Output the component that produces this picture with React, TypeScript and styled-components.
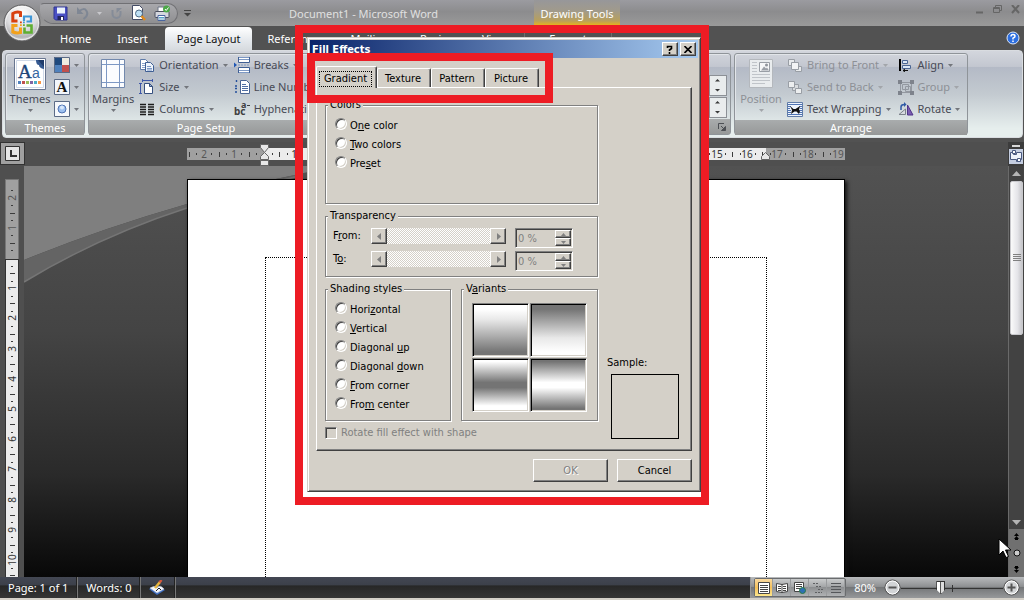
import React from "react";
import styled, { createGlobalStyle } from "styled-components";

const UI = '"Noto Sans", "Open Sans", sans-serif';
const CLASSIC = '"DejaVu Sans Condensed", "DejaVu Sans", sans-serif';
const FACE = "#d4d0c8";
const RED = "#ed1c24";

const GlobalStyle = createGlobalStyle`
  * { box-sizing: border-box; }
  body { margin: 0; background: #525252; font-family: ${UI}; font-size: 11px; overflow: hidden; }
  button, input, select { font: inherit; color: inherit; }
  button { padding: 0; border: 0; background: none; }
  svg { display: block; flex: none; }
`;

const Window = styled.div`
  position: relative;
  display: flex;
  flex-direction: column;
  min-height: 100vh;
`;

/* ---------- title bar ---------- */

const TitleBar = styled.header`
  display: grid;
  grid-template-columns: 289px 245px 86px 1fr;
  height: 26px;
  background: linear-gradient(#9b9ba0, #8c8c8e 45%, #9a9a9a);
  color: #e0e0e0;
  line-height: 16px;
`;

const QuickAccess = styled.div`
  display: flex;
  align-items: center;
  padding-left: 40px;
`;

const QuickPill = styled.div`
  display: flex;
  align-items: center;
  gap: 8px;
  width: 138px;
  height: 21px;
  padding-left: 12px;
  border: 1px solid #707074;
  border-left-color: transparent;
  border-radius: 4px 11px 11px 14px;
  background: linear-gradient(#a8a8ac, #8f8f91);
`;

const IconButton = styled.button`
  display: flex;
  align-items: center;
  justify-content: center;
`;

const MoreButton = styled(IconButton)`
  margin-left: 6px;
`;

const DocTitle = styled.h1`
  margin: 0;
  padding-top: 6px;
  font-size: 11px;
  font-weight: 400;
`;

const ContextTitle = styled.div`
  padding-top: 6px;
  text-align: center;
  color: #fff;
  background: linear-gradient(#97979a, #a09a8c 40%, #b8a05c 80%, #f0b810);
`;

const Caption = styled.div`
  display: flex;
  justify-content: flex-end;
  gap: 9px;
  padding: 5px 4px 0 0;
  align-items: flex-start;
`;

const OfficeButton = styled.button`
  position: absolute;
  left: 3px;
  top: 4px;
  z-index: 2;
`;

/* ---------- ribbon ---------- */

const TabStrip = styled.nav`
  display: flex;
  align-items: flex-end;
  height: 24px;
  padding: 0 4px 0 47px;
  background: #525252;
`;

const RibbonTab = styled.button<{ $active?: boolean }>`
  height: 23px;
  padding: 0 ${(p) => (p.$active ? 12 : 13)}px;
  margin: 0 ${(p) => (p.$active ? 2 : 0)}px 0 ${(p) => (p.$active ? 4 : 0)}px;
  line-height: 22px;
  font-size: 11px;
  color: ${(p) => (p.$active ? "#111" : "#fff")};
  border-radius: 4px 4px 0 0;
  background: ${(p) => (p.$active ? "linear-gradient(#fff, #e4e8ec 60%, #d6dade)" : "none")};
`;

const ContextTab = styled(RibbonTab)`
  width: 88px;
  margin-left: 5px;
  border: solid #6e6e6e;
  border-width: 0 1px;
  border-radius: 0;
`;

const HelpButton = styled(IconButton)`
  margin-left: auto;
  align-self: center;
`;

const Ribbon = styled.section`
  display: flex;
  gap: 3px;
  height: 88px;
  margin: 0 1px 4px 2px;
  padding: 2px;
  border: 1px solid #d9dce0;
  border-radius: 4px;
  background: linear-gradient(#d3d6dd, #c3c7d0 18%, #b4bac6 19%, #c3cad0 50%, #e6eeed 90%);
`;

const Group = styled.section<{ $grow?: boolean; $width?: number }>`
  display: flex;
  flex-direction: column;
  flex: ${(p) => (p.$grow ? "1 1 0" : "0 0 auto")};
  width: ${(p) => (p.$width ? p.$width + "px" : "auto")};
  border: 1px solid #8f9499;
  border-radius: 3px;
  box-shadow: inset 1px 1px 0 #e2e5e9;
`;

const GroupBody = styled.div`
  flex: 1;
  display: flex;
  padding: 0 3px;
  color: #484a55;
`;

const GroupLabel = styled.h2`
  display: flex;
  align-items: center;
  justify-content: center;
  height: 15px;
  margin: 0;
  font-size: 11px;
  font-weight: 400;
  line-height: 15px;
  color: #fff;
  background: linear-gradient(#a9acad, #969898);
`;

const LauncherLabel = styled(GroupLabel)`
  justify-content: flex-end;
  padding-right: 4px;
`;

const BigButton = styled.button<{ $off?: boolean; $wide?: boolean }>`
  display: flex;
  flex-direction: column;
  align-items: center;
  width: ${(p) => (p.$wide ? 46 : 42)}px;
  height: 66px;
  padding-top: 4px;
  line-height: 16px;
  color: ${(p) => (p.$off ? "#8d9096" : "inherit")};
  svg + span { margin-top: 1px; }
  span + svg { margin-top: 2px; }
`;

const Stack = styled.div<{ $gap?: number }>`
  display: flex;
  flex-direction: column;
  margin-left: ${(p) => p.$gap ?? 4}px;
`;

const SmallButton = styled.button<{ $off?: boolean }>`
  display: flex;
  align-items: center;
  gap: 4px;
  height: 22px;
  line-height: 16px;
  white-space: nowrap;
  color: ${(p) => (p.$off ? "#8d9096" : "inherit")};
`;

const SpinStack = styled.div`
  display: flex;
  flex-direction: column;
  justify-content: flex-end;
  align-items: flex-end;
  gap: 1px;
  flex: 1;
  padding-bottom: 1px;
`;

const SpinPair = styled.button`
  display: flex;
  align-items: center;
  justify-content: center;
  width: 18px;
  height: 21px;
  border: 1px solid #8c9096;
  background: #e9eced;
`;

/* ---------- document area ---------- */

const Workspace = styled.main`
  display: grid;
  flex: 1;
  grid-template-columns: 24px 1fr 16px;
  grid-template-rows: 24px 1fr;
  background: #4f4f4f;
`;

const TabSelector = styled.button`
  display: flex;
  align-items: center;
  justify-content: center;
  width: 25px;
  height: 23px;
  border: 1px solid #333;
  background: #a0a0a0;
`;

const RulerRow = styled.div`
  display: flex;
  justify-content: center;
`;

const RulerColumn = styled.div`
  padding: 13px 0 0 5px;
  overflow: hidden;
`;

const Canvas = styled.div`
  display: grid;
  justify-items: center;
  overflow: hidden;
  background: linear-gradient(#525252, #444 40%, #2a2a2a 75%, #080808);
  > * { grid-area: 1 / 1; }
`;

const Swoosh = styled.svg`
  justify-self: start;
`;

const Sheet = styled.article`
  position: relative;
  width: 658px;
  margin-top: 13px;
  padding: 77px;
  padding-bottom: 0;
  border: 1px solid #000;
  border-bottom: 0;
  background: #fff;
  box-shadow: 2px 2px 4px #111;
`;

const TextArea = styled.div`
  height: 100%;
  border: 1px dotted #000;
  border-bottom: 0;
`;

const RulerToggle = styled.div`
  display: flex;
  flex-direction: column;
  align-items: center;
  background: #3c3c3c;
`;

const SplitHandle = styled.div`
  width: 8px;
  height: 2px;
  margin: 3px 0 2px;
  background: #d8d8d8;
`;

const ScrollColumn = styled.div`
  display: flex;
  flex-direction: column;
  border-left: 1px solid #6a6a6a;
  background: #424242;
`;

const ScrollArrow = styled.button`
  display: flex;
  align-items: center;
  justify-content: center;
  height: 14px;
`;

const ScrollTrack = styled.div`
  flex: 1;
  padding: 1px 1px 0;
`;

const ScrollThumb = styled.div`
  display: flex;
  align-items: center;
  justify-content: center;
  height: 154px;
  border: 1px solid #c8c8cc;
  border-radius: 2px;
  background: linear-gradient(90deg, #fafafa, #e4e4e8 60%, #c6c6ca);
`;

const BrowseButtons = styled.div`
  display: flex;
  flex-direction: column;
  align-items: center;
  justify-content: space-around;
  height: 48px;
  background: #707070;
`;

/* ---------- status bar ---------- */

const StatusBar = styled.footer`
  display: flex;
  height: 23px;
  border-bottom: 2px solid ${FACE};
  color: #fff;
  line-height: 20px;
  background: linear-gradient(#434753, #3c404a 38%, #272727 42%, #353535);
`;

const StatusItem = styled.div`
  display: flex;
  align-items: center;
  padding: 0 8px;
  border-right: 2px groove #777;
`;

const ViewZone = styled.div`
  display: flex;
  align-items: center;
  flex: none;
  width: 274px;
  margin-left: auto;
  padding: 0 4px 0 3px;
  border-left: 1px solid #999;
  background: linear-gradient(#b8babc, #8f9193 45%, #747678 50%, #96989a);
`;

const ViewGroup = styled.div`
  display: flex;
  height: 19px;
  border: 1px solid #6a6c6e;
  border-radius: 2px;
  background: linear-gradient(#c9cbcc, #a4a6a8 45%, #8d8f91 50%, #b0b2b4);
`;

const ViewButton = styled.button<{ $on?: boolean }>`
  display: flex;
  align-items: center;
  justify-content: center;
  width: 18px;
  border-right: 1px solid #999b9d;
  background: ${(p) => (p.$on ? "linear-gradient(#f8d9a0, #f5c05a 50%, #fde68c)" : "none")};
`;

const ZoomText = styled.button`
  width: 38px;
  color: #fff;
`;

const ZoomRange = styled.input`
  appearance: none;
  flex: 1;
  min-width: 0;
  height: 16px;
  margin: 0;
  background:
    linear-gradient(#333, #333) 50% 5px / 1px 7px no-repeat,
    linear-gradient(#333, #333) 0 8px / 100% 1px no-repeat;
  &::-webkit-slider-thumb {
    appearance: none;
    width: 9px;
    height: 13px;
    border: 1px solid #333;
    background: linear-gradient(90deg, #fff 40%, #555 41%, #555 59%, #ddd 60%);
    clip-path: polygon(0 0, 100% 0, 100% 65%, 50% 100%, 0 65%);
  }
`;

/* ---------- dialog ---------- */

const Dialog = styled.div`
  position: absolute;
  left: 307px;
  top: 37px;
  z-index: 3;
  display: flex;
  flex-direction: column;
  width: 394px;
  padding: 2px;
  border: 1px solid;
  border-color: ${FACE} #404040 #404040 ${FACE};
  box-shadow: inset 1px 1px 0 #fff, inset -1px -1px 0 #808080;
  background: ${FACE};
  color: #000;
  font-family: ${CLASSIC};
  font-size: 11px;
  line-height: 14px;
`;

const DialogBar = styled.div`
  display: flex;
  align-items: center;
  gap: 2px;
  height: 18px;
  padding: 0 2px 0 2px;
  color: #fff;
  background: linear-gradient(90deg, #0a246a, #a6caf0);
`;

const DialogTitle = styled.h2`
  flex: 1;
  margin: 0;
  padding-top: 1px;
  font-size: 11px;
  font-weight: 700;
`;

const Raised = styled.button`
  display: flex;
  align-items: center;
  justify-content: center;
  border: 1px solid;
  border-color: #fff #404040 #404040 #fff;
  box-shadow: inset -1px -1px 0 #808080;
  background: ${FACE};
`;

const BarButton = styled(Raised)`
  width: 16px;
  height: 14px;
  color: #000;
`;

const DialogBody = styled.div`
  padding: 8px 6px 7px;
`;

const DialogTabs = styled.div`
  display: flex;
  align-items: flex-end;
  height: 21px;
`;

const DialogTab = styled.button<{ $active?: boolean }>`
  position: relative;
  width: ${(p) => (p.$active ? 61 : 54)}px;
  height: ${(p) => (p.$active ? 22 : 19)}px;
  margin-bottom: ${(p) => (p.$active ? -1 : 0)}px;
  z-index: ${(p) => (p.$active ? 1 : 0)};
  border: 1px solid;
  border-width: 1px 1px 0;
  border-color: #fff #404040 #fff #fff;
  border-radius: 2px 2px 0 0;
  box-shadow: inset -1px 0 0 #808080;
  background: ${FACE};
  span {
    display: block;
    margin: 2px 4px 0 2px;
    border: ${(p) => (p.$active ? "1px dotted #000" : "0")};
  }
`;

const Panel = styled.div`
  display: flex;
  gap: 9px;
  height: 364px;
  padding: 10px 8px 9px;
  border: 1px solid;
  border-color: #fff #404040 #404040 #fff;
  box-shadow: inset -1px -1px 0 #808080;
`;

const Column = styled.div`
  display: flex;
  flex-direction: column;
  gap: 5px;
  width: 273px;
`;

const Pair = styled.div`
  display: flex;
  justify-content: space-between;
`;

const Frame = styled.fieldset<{ $width?: number; $height: number }>`
  width: ${(p) => (p.$width ? p.$width + "px" : "auto")};
  height: ${(p) => p.$height}px;
  min-width: 0;
  margin: 0;
  padding: 4px 7px 0;
  border: 1px solid #808080;
  box-shadow: 1px 1px 0 #fff, inset 1px 1px 0 #fff;
`;

const Legend = styled.legend`
  margin-left: -5px;
  padding: 0 2px;
  height: 14px;
  background: ${FACE};
`;

const RadioRow = styled.label`
  display: flex;
  align-items: center;
  gap: 3px;
  height: 19px;
  padding-left: 2px;
`;

const Radio = styled.input`
  appearance: none;
  width: 12px;
  height: 12px;
  margin: 0 0 4px;
  border: 1px solid;
  border-color: #808080 #fff #fff #808080;
  border-radius: 50%;
  box-shadow: inset 1px 1px 0 #404040, inset -1px -1px 0 ${FACE};
  background: #fff;
`;

const SliderRow = styled.div`
  display: flex;
  align-items: flex-start;
  height: 23px;
  padding-top: 1px;
  label { width: 38px; padding-top: 1px; }
`;

const SliderFrame = styled.div`
  display: flex;
  width: 135px;
  height: 16px;
  margin-right: 9px;
`;

const ArrowButton = styled(Raised)`
  width: 16px;
  height: 16px;
`;

const SliderTrack = styled.div`
  flex: 1;
  background: repeating-conic-gradient(#fff 0 25%, ${FACE} 0 50%) 0 0 / 2px 2px;
`;

const Spinner = styled.div`
  display: flex;
  width: 58px;
  height: 20px;
  padding: 1px;
  border: 1px solid;
  border-color: #808080 #fff #fff #808080;
  box-shadow: inset 1px 1px 0 #404040;
`;

const SpinnerInput = styled.input`
  flex: 1;
  min-width: 0;
  padding: 1px 1px 0;
  border: 0;
  color: #808080;
  background: transparent;
`;

const SpinnerArrows = styled.div`
  display: grid;
  width: 16px;
  grid-template-rows: 1fr 1fr;
`;

const SwatchGrid = styled.div`
  display: grid;
  grid-template-columns: 57px 57px;
  grid-auto-rows: 54px;
  gap: 1px;
  margin-top: 3px;
  margin-left: 3px;
`;

const Swatch = styled.button<{ $fill: string }>`
  border: 1px solid;
  border-color: #808080 #fff #fff #808080;
  box-shadow: inset 1px 1px 0 #000, inset -1px -1px 0 ${FACE};
  background: linear-gradient(${(p) => p.$fill});
`;

const CheckRow = styled.label`
  display: flex;
  align-items: center;
  gap: 4px;
  color: #808080;
`;

const Check = styled.input`
  appearance: none;
  width: 12px;
  height: 12px;
  margin: 0;
  border: 1px solid;
  border-color: #808080 #fff #fff #808080;
  box-shadow: inset 1px 1px 0 #404040;
`;

const SampleColumn = styled.div`
  display: flex;
  flex-direction: column;
  justify-content: flex-end;
  gap: 4px;
  padding-bottom: 2px;
`;

const SampleBox = styled.div`
  width: 68px;
  height: 65px;
  margin-left: 4px;
  border: 1px solid #000;
`;

const Actions = styled.div`
  display: flex;
  justify-content: flex-end;
  gap: 9px;
  padding-top: 8px;
`;

const ActionButton = styled(Raised)`
  width: 75px;
  height: 23px;
  &:disabled { color: #808080; text-shadow: 1px 1px 0 #fff; }
`;

/* ---------- annotations and pointer ---------- */

const Highlight = styled.div<{ $x: number; $y: number; $w: number; $h: number }>`
  position: absolute;
  left: ${(p) => p.$x}px;
  top: ${(p) => p.$y}px;
  z-index: 4;
  width: ${(p) => p.$w}px;
  height: ${(p) => p.$h}px;
  border: 8px solid ${RED};
  pointer-events: none;
`;

const Pointer = styled.svg`
  position: absolute;
  left: 998px;
  top: 538px;
  z-index: 5;
`;

/* ---------- drawings ---------- */

const Caret = ({ color = "#73767c" }: { color?: string }) => (
  <svg width="5" height="3"><path d="M0 0h5L2.500 3z" fill={color} /></svg>
);

const Tri = ({ d, color = "#000", w = 7, h = 7 }: { d: string; color?: string; w?: number; h?: number }) => (
  <svg width={w} height={h}><path d={d} fill={color} /></svg>
);

const OfficeLogo = () => (
  <svg width="38" height="38" viewBox="0 0 38 38">
    <defs>
      <radialGradient id="orb" cx=".5" cy=".25" r=".8">
        <stop offset="0" stopColor="#fff" /><stop offset=".55" stopColor="#dcdcde" />
        <stop offset=".8" stopColor="#b4b4b7" /><stop offset="1" stopColor="#f4f4f4" />
      </radialGradient>
    </defs>
    <circle cx="19" cy="19" r="18" fill="url(#orb)" stroke="#5b5b5d" />
    <circle cx="19" cy="19" r="16.500" fill="none" stroke="#fff" strokeOpacity=".6" />
    <g fill="none">
      <path d="M14.500 17H9.800V9.500q3.700-2.200 7.700-1v4.500" stroke="#d8400f" strokeWidth="3" />
      <path d="M21 17v-4.500h7v5h-4.500" stroke="#3f96d6" strokeWidth="2.200" />
      <path d="M14.500 21.500H9.800v6.500q3.700 1.500 7.700 .5v-5" stroke="#f3a11b" strokeWidth="3" />
      <path d="M23.500 21.500h5v7h-7v-5" stroke="#5fae32" strokeWidth="2.600" />
    </g>
    <path d="M17 17.500h1.800v1.800H17z" fill="#d8400f" /><path d="M20 17.500h1.800v1.800H20z" fill="#3f96d6" />
    <path d="M17 20.300h1.800v1.800H17z" fill="#f3a11b" /><path d="M20 20.300h1.800v1.800H20z" fill="#5fae32" />
  </svg>
);

const SaveIcon = () => (
  <svg width="15" height="15"><path d="M1 1h13v13H2.500L1 12.500z" fill="#4a50c4" stroke="#2f3590" />
    <path d="M4 1.500h8v6H4z" fill="#e9f1fb" /><path d="M4.500 10h6.500v4H4.500z" fill="#23265c" /><path d="M8 11h2v3H8z" fill="#fff" /></svg>
);
const UndoIcon = () => (
  <svg width="13" height="14"><path d="M3 5.500Q8 1 10.500 5t-3 8" fill="none" stroke="#7f8794" strokeWidth="2" /><path d="M1 1v7h6.500z" fill="#7f8794" /></svg>
);
const RedoIcon = () => (
  <svg width="13" height="13"><path d="M2.500 3v4a4 4 0 0 0 8 0V4" fill="none" stroke="#858c98" strokeWidth="2" /><path d="M6.500 6V1H12z" fill="#858c98" /></svg>
);
const PreviewIcon = () => (
  <svg width="15" height="16"><path d="M1.500.5h7l3 3v11h-10z" fill="#fff" stroke="#444c66" /><circle cx="8" cy="8.500" r="3.500" fill="#bfe0f4" stroke="#4d6a85" />
    <path d="M10.500 11l3.500 4" stroke="#e08b1e" strokeWidth="2.500" /></svg>
);
const PrintIcon = () => (
  <svg width="17" height="16"><path d="M4 2h7v5H4z" fill="#fff" stroke="#6d7485" /><rect x="1" y="6.500" width="14" height="6" rx="1" fill="#d5d7de" stroke="#4c5160" />
    <path d="M4 10.500h7v5H4z" fill="#fff" stroke="#4a66a0" /><path d="M5 12.500h5M5 14h5" stroke="#57a3c8" /><circle cx="12.500" cy="4" r="3.500" fill="#4ba847" /><path d="M11 4l1.200 1.500L14.500 2.500" stroke="#fff" fill="none" /></svg>
);
const MoreIcon = () => (
  <svg width="7" height="7"><path d="M0 .5h7" stroke="#444" /><path d="M0 3h7L3.500 6.500z" fill="#444" /></svg>
);

const ThemesIcon = () => (
  <svg width="32" height="32"><path d="M.5.500h31v31H.5z" fill="#fff" stroke="#68758f" /><path d="M2.500 2.500h27v27h-27z" fill="#fff" stroke="#cfd9e8" />
    <path d="M22 2h8v9q-5-1-5-4-3 0-3-5z" fill="#34588f" /><path d="M24 2h6v7z" fill="#203c6b" />
    <text x="4" y="20" fontFamily="Liberation Serif" fontSize="19" fill="#1d4578" stroke="#1d4578" strokeWidth=".4">A</text>
    <text x="18" y="20" fontFamily="Liberation Sans" fontSize="14" fill="#35669f">a</text>
    {["#4f81bd", "#c0504d", "#9bbb59", "#8064a2", "#4bacc6", "#f79646"].map((c, i) => <rect key={c} x={4 + i * 4} y="23" width="3" height="3" fill={c} />)}
  </svg>
);
const ColorsIcon = () => (
  <svg width="16" height="16"><path fill="#1f497d" d="M0 0h8v8H0z" /><path fill="#eeece1" d="M8 0h8v8H8z" /><path fill="#4f81bd" d="M0 8h8v8H0z" /><path fill="#c0504d" d="M8 8h8v8H8z" /><path d="M.5.500h15v15H.5z" fill="none" stroke="#5b6b86" /></svg>
);
const FontsIcon = () => (
  <svg width="16" height="16"><path d="M.5.500h15v15H.5z" fill="#f2f6fb" stroke="#5b6b86" /><text x="8" y="13" textAnchor="middle" fontFamily="Liberation Serif" fontSize="15" fontWeight="700" fill="#111">A</text></svg>
);
const EffectsIcon = () => (
  <svg width="16" height="16"><path d="M.5.500h15v15H.5z" fill="#f6f9fc" stroke="#5b6b86" /><circle cx="8" cy="8" r="4" fill="#9cc0f0" stroke="#4f74b4" /><circle cx="8" cy="6.500" r="2" fill="#d8e8fc" /></svg>
);
const MarginsIcon = () => (
  <svg width="24" height="32"><path d="M.5 1.500h23v28H.5z" fill="#fbfcfe" stroke="#7389ad" /><path d="M5.500 2v27M18.500 2v27M1 6.500h22M1 24.500h22" stroke="#7d98c4" /></svg>
);
const OrientationIcon = () => (
  <svg width="16" height="15"><path d="M1.500 1.500h5l3 3v7h-8z" fill="#fff" stroke="#5f7ba8" /><path d="M3 5.500h4M3 7.500h4M3 9.500h3" stroke="#8ba4cc" /><path d="M6.500 4.500h5l3 3v6h-8z" fill="#eef4fc" stroke="#3f5f94" /><path d="M8 8.500h4M8 10.500h5M8 12h5" stroke="#7d98c4" /></svg>
);
const SizeIcon = () => (
  <svg width="16" height="16"><path d="M3 1.500h11M3.500 0v3M13.500 0v3M1.500 4v11M0 4.500h3M0 14.500h3" stroke="#3f58a8" fill="none" /><path d="M5.500 4.500h5l3 3v7h-8z" fill="#fff" stroke="#36507f" /><path d="M10.500 4.500v3h3z" fill="#9db5d8" stroke="#36507f" /></svg>
);
const ColumnsIcon = () => (
  <svg width="16" height="13"><path d="M1 1.500h6M9 1.500h6M1 4h6M9 4h6M1 6.500h6M9 6.500h6M1 9h6M9 9h6M1 11.500h6M9 11.500h6" stroke="#1c1c1c" strokeWidth="1.300" /></svg>
);
const BreaksIcon = () => (
  <svg width="16" height="16"><path d="M4.500 0v5.500h11V0" fill="#fff" stroke="#3f5f94" /><path d="M4.500 16v-5.500h11V16" fill="#fff" stroke="#3f5f94" /><path d="M5 2.500h10M5 13.500h10M5 .5h10M5 15.500h10" stroke="#7d98c4" /><path d="M4 8h12" stroke="#7d98c4" strokeDasharray="2 1" /><path d="M0 5.500v5L3 8z" fill="#1f56b4" /></svg>
);
const LinesIcon = () => (
  <svg width="16" height="16"><path d="M6.500 1.500h6l3 3v10h-9z" fill="#fff" stroke="#4a6593" /><path d="M8 5.500h4M8 7.500h6M8 9.500h6M8 11.500h6" stroke="#506fa3" /><path d="M2.500 1v3M1 7h3M1 9.500h3M1 13h3" stroke="#234f9c" strokeWidth="1.400" strokeDasharray="2 1" /></svg>
);
const HyphenIcon = () => (
  <svg width="16" height="16" fontFamily="Noto Sans" fontWeight="700" fontSize="10" fill="#404040"><text x="0" y="14">bc</text><text x="7" y="7" fontSize="9">a</text><path d="M13 4h3v1h-3z" /></svg>
);
const PositionIcon = () => (
  <svg width="24" height="32"><path d="M.5 1.500h23v28H.5z" fill="#e9ecee" stroke="#b4b8bd" /><path d="M10.500 4.500h10v9h-10z" fill="#f6f7f8" stroke="#999ea5" /><path d="M12 12.500l3-4 2 2 1-1 2 3z" fill="#9a9fa6" /><circle cx="17.500" cy="7" r="1.500" fill="#8f949b" /><path d="M3 4.500h5M3 7.500h5M3 10.500h5M3 13.500h5M3 16.500h18M3 19.500h18M3 22.500h18M3 25.500h13" stroke="#c0c4c9" /></svg>
);
const FrontIcon = () => (
  <svg width="16" height="15" stroke="#999ea5"><path d="M1.500 1.500h6v6h-6z" fill="#e8eaec" /><path d="M8.500 8.500h6v5h-6z" fill="#e8eaec" /><path d="M4.500 4.500h7v7h-7z" fill="#f3f4f5" /></svg>
);
const BackIcon = () => (
  <svg width="16" height="15" stroke="#999ea5"><path d="M5.500 4.500h6v6h-6z" fill="#d9dcdf" /><path d="M1.500 1.500h6v6h-6z" fill="#eceeef" /><path d="M8.500 8.500h6v5h-6z" fill="#eceeef" /></svg>
);
const WrapIcon = () => (
  <svg width="16" height="15"><path d="M.5.500h15v14H.5z" fill="#eef4fc" stroke="#5f7ba8" /><path d="M1 2.500h14M1 4.500h3M12 4.500h3M1 6.500h2M13 6.500h2M1 8.500h3M12 8.500h3M1 10.500h3M12 10.500h3M1 12.500h14" stroke="#4f74b4" /><path d="M3 4l3.500 3h2L13 4l-1 4 1 1-1 3-2.500-2.500h-2L4 12l1-4z" fill="#111" /></svg>
);
const AlignIcon = () => (
  <svg width="16" height="14"><path d="M2 1v12" stroke="#000" strokeWidth="2" /><path d="M4.500 2.500h5v3h-5zM4.500 7.500h8v3h-8z" fill="#dbe7f6" stroke="#4a6593" /><path d="M5 12.500h5M5 12.500l2-1.500M5 12.500l2 1.500" stroke="#111" /></svg>
);
const GroupIcon = () => (
  <svg width="16" height="15"><path d="M2.500 2.500h11v10h-11zM4.500 4.500h6v5h-6zM7.500 6.500h5v5h-5z" fill="none" stroke="#9398a0" /><path d="M0 0h4v4H0zM12 0h4v4h-4zM0 11h4v4H0zM12 11h4v4h-4z" fill="#7e838c" /></svg>
);
const RotateIcon = () => (
  <svg width="16" height="14"><path d="M9.500 3v10H15z" fill="#7a5db0" stroke="#50358a" /><path d="M1 12.500L7.500 7v5.500z" fill="#d7dbe0" stroke="#7c828b" /><path d="M3 8V5q0-2.500 3.500-2.500" fill="none" stroke="#2f5aa6" strokeWidth="1.500" /><path d="M6 0v5l2.500-2.500z" fill="#2f5aa6" /></svg>
);
const LauncherIcon = () => (
  <svg width="8" height="8" fill="none" stroke="#4c4f54"><path d="M.5 6V.5H6" /><path d="M3 3l3 3" /><path d="M7.500 3.500v4h-4z" fill="#4c4f54" /></svg>
);
const UpDown = () => (
  <svg width="6" height="15" fill="#3a3a3a"><path d="M0 3.500h5L2.500 1zM0 11h5l-2.500 2.500z" /></svg>
);

const StatusPen = () => (
  <svg width="17" height="16"><path d="M0 9l8-4 8 5-8 5z" fill="#3d6cc0" /><path d="M1 8q4-3 7 0 3-4 7 1l-7 4z" fill="#f4f6fa" stroke="#b8c2d6" strokeWidth=".6" /><path d="M6 8l5-6" stroke="#e8b53c" strokeWidth="2.500" /><path d="M10.500 2.500l2-2.500" stroke="#d6583c" strokeWidth="2.500" /><path d="M7 11l3-3 2 2" fill="none" stroke="#222" /></svg>
);

const viewIcons = [
  <svg key="print" width="12" height="12"><path d="M.5.500h11v11H.5z" fill="#fff" stroke="#454545" /><path d="M2 3.500h8M2 5.500h8M2 7.500h8M2 9.500h8" stroke="#444" /></svg>,
  <svg key="read" width="12" height="12"><path d="M.5 1.500l5.500 1 5.500-1v8l-5.500 1-5.500-1z" fill="#fff" stroke="#454545" /><path d="M6 2v9M2 4.500h3M7 4.500h3M2 6.500h3M7 6.500h3M2 8.500h3M7 8.500h3" stroke="#444" /></svg>,
  <svg key="web" width="12" height="12"><path d="M.5.500h9v9h-9z" fill="#fff" stroke="#454545" /><path d="M2 2.500h6M2 4.500h6M2 6.500h4" stroke="#444" /><circle cx="8.500" cy="8.500" r="3" fill="#2e6fb4" stroke="#2a7a44" /></svg>,
  <svg key="outline" width="12" height="12"><path d="M1 1.500h6M4 4.500h6M6 7.500h5M3 10.500h7" stroke="#5e6062" strokeDasharray="2 1" /></svg>,
  <svg key="draft" width="12" height="12"><path d="M1 1.500h10M1 4.500h10M1 7.500h10M1 10.500h10" stroke="#55575a" /></svg>,
];

const ZoomKnob = ({ plus }: { plus?: boolean }) => (
  <svg width="17" height="17"><circle cx="8.500" cy="8.500" r="7.500" fill="#d2d4d6" stroke="#4a4a4a" /><circle cx="8.500" cy="8.500" r="6.500" fill="none" stroke="#fff" /><path d={plus ? "M4.500 8.500h8M8.500 4.500v8" : "M4.500 8.500h8"} stroke="#555" strokeWidth="2" /></svg>
);

/* One centimetre on the rulers at 80% zoom */
const CM = 30.2;

function marks(from: number, to: number) {
  const list: { n: number; kind: "num" | "half" | "dot" }[] = [];
  for (let q = from * 4; q <= to * 4; q++) {
    if (q === 0) continue;
    list.push({ n: q / 4, kind: q % 4 === 0 ? "num" : q % 2 === 0 ? "half" : "dot" });
  }
  return list;
}

const HorizontalRuler = () => (
  <svg width="658" height="24" fontFamily="Noto Sans" fontSize="10" fill="#3c3c3c" shapeRendering="crispEdges">
    <path d="M0 6h658v12H0z" fill="#a0a0a0" /><path d="M77 6h502v12H77z" fill="#ececec" />
    {marks(-2.5, 18.75).map((m) => {
      const x = Math.round(77 + m.n * CM);
      return m.kind === "num"
        ? <text key={m.n} x={x} y="16" textAnchor="middle" fill={m.n < 0 || m.n > 16.500 ? "#555" : "#333"}>{Math.abs(m.n)}</text>
        : <rect key={m.n} x={x} y={m.kind === "half" ? 10 : 11} width="1" height={m.kind === "half" ? 5 : 2} />;
    })}
    <text x="651" y="16" textAnchor="middle" fill="#555">19</text>
    <g fill="#e8e8e8" stroke="#666" shapeRendering="auto">
      <path d="M73.500 2.500h8v3l-4 5-4-5z" /><path d="M73.500 17.500v-3l4-4 4 4v3z" /><path d="M73.500 18.500h8v5h-8z" />
      <path d="M574.500 17.500v-3l4-4 4 4v3z" />
    </g>
  </svg>
);

const VerticalRuler = () => (
  <svg width="14" height="398" fontFamily="Noto Sans" fontSize="10" fill="#3c3c3c" shapeRendering="crispEdges">
    <path d="M.5.500h13v80H.5z" fill="#a0a0a0" stroke="#777" /><path d="M.5 80.500h13V470H.5z" fill="#ececec" stroke="#333" />
    {marks(-2.25, 10.5).map((m) => {
      const y = Math.round(79 + m.n * CM);
      return m.kind === "num"
        ? <text key={m.n} transform={`translate(11 ${y}) rotate(-90)`} textAnchor="middle" fill={m.n < 0 ? "#555" : "#333"}>{Math.abs(m.n)}</text>
        : <rect key={m.n} x={m.kind === "half" ? 5 : 6} y={y} width={m.kind === "half" ? 5 : 2} height="1" />;
    })}
  </svg>
);

type Item = { icon: React.ReactNode; text?: string; off?: boolean };

const Items = ({ list, gap }: { list: Item[]; gap?: number }) => (
  <Stack $gap={gap}>
    {list.map((it, i) => (
      <SmallButton key={i} $off={it.off}>
        {it.icon}
        {it.text && <span>{it.text}</span>}
        <Caret color={it.off ? "#a2a5aa" : undefined} />
      </SmallButton>
    ))}
  </Stack>
);

/* Underlines the letter that follows "_", the access key of the label */
const Key = ({ text }: { text: string }) => {
  const i = text.indexOf("_");
  return i < 0 ? <span>{text}</span> : <span>{text.slice(0, i)}<u>{text[i + 1]}</u>{text.slice(i + 2)}</span>;
};

const Radios = ({ name, list }: { name: string; list: string[] }) => (
  <>
    {list.map((t) => (
      <RadioRow key={t}><Radio type="radio" name={name} /><Key text={t} /></RadioRow>
    ))}
  </>
);

const Transparency = ({ id, text }: { id: string; text: string }) => (
  <SliderRow>
    <label htmlFor={id}><Key text={text} /></label>
    <SliderFrame>
      <ArrowButton disabled aria-label="Decrease"><Tri d="M5 0v7L1 3.500z" color="#808080" /></ArrowButton>
      <SliderTrack />
      <ArrowButton disabled aria-label="Increase"><Tri d="M2 0v7l4-3.500z" color="#808080" /></ArrowButton>
    </SliderFrame>
    <Spinner>
      <SpinnerInput id={id} defaultValue="0 %" disabled />
      <SpinnerArrows>
        <Raised disabled aria-label="Up"><Tri w={5} h={3} d="M0 3h5L2.500 0z" color="#808080" /></Raised>
        <Raised disabled aria-label="Down"><Tri w={5} h={3} d="M0 0h5L2.500 3z" color="#808080" /></Raised>
      </SpinnerArrows>
    </Spinner>
  </SliderRow>
);

const FillEffects = () => (
  <Dialog role="dialog" aria-labelledby="fill-title">
    <DialogBar>
      <DialogTitle id="fill-title">Fill Effects</DialogTitle>
      <BarButton aria-label="Help"><svg width="8" height="9"><path d="M1.500 3V1.500h4v2L3.500 5v1M3.500 7v2" fill="none" stroke="#000" strokeWidth="1.600" /></svg></BarButton>
      <BarButton aria-label="Close"><svg width="8" height="7"><path d="M.5 0l7 7M7.500 0l-7 7" stroke="#000" strokeWidth="1.600" /></svg></BarButton>
    </DialogBar>
    <DialogBody>
      <DialogTabs>
        <DialogTab $active><span>Gradient</span></DialogTab>
        <DialogTab><span>Texture</span></DialogTab>
        <DialogTab><span>Pattern</span></DialogTab>
        <DialogTab><span>Picture</span></DialogTab>
      </DialogTabs>
      <Panel>
        <Column>
          <Frame $height={106}>
            <Legend>Colors</Legend>
            <Radios name="colors" list={["O_ne color", "_Two colors", "Pre_set"]} />
          </Frame>
          <Frame $height={68}>
            <Legend>Transparency</Legend>
            <Transparency id="from" text="F_rom:" />
            <Transparency id="to" text="T_o:" />
          </Frame>
          <Pair>
            <Frame $width={126} $height={139}>
              <Legend>Shading styles</Legend>
              <Radios name="style" list={["Hori_zontal", "_Vertical", "Diagonal _up", "Diagonal _down", "_From corner", "Fro_m center"]} />
            </Frame>
            <Frame $width={137} $height={139}>
              <Legend><Key text="V_ariants" /></Legend>
              <SwatchGrid>
                <Swatch aria-label="Light to dark" $fill="#fff 10%, #e8e8e8 30%, #747474 92%" />
                <Swatch aria-label="Dark to light" $fill="#747474 10%, #e8e8e8 65%, #fff 92%" />
                <Swatch aria-label="Dark centre" $fill="#fff 5%, #747474 45%, #747474 55%, #fff 90%" />
                <Swatch aria-label="Light centre" $fill="#747474 5%, #fff 45%, #fff 55%, #747474 95%" />
              </SwatchGrid>
            </Frame>
          </Pair>
          <CheckRow><Check type="checkbox" disabled /><span>Rotate fill effect with shape</span></CheckRow>
        </Column>
        <SampleColumn>
          <span>Sample:</span>
          <SampleBox />
        </SampleColumn>
      </Panel>
      <Actions>
        <ActionButton disabled>OK</ActionButton>
        <ActionButton>Cancel</ActionButton>
      </Actions>
    </DialogBody>
  </Dialog>
);

export default function App() {
  return (
    <Window>
      <GlobalStyle />
      <TitleBar>
        <QuickAccess>
          <QuickPill>
            <IconButton aria-label="Save"><SaveIcon /></IconButton>
            <IconButton aria-label="Undo"><UndoIcon /></IconButton>
            <Caret color="#c8c8cc" />
            <IconButton aria-label="Redo"><RedoIcon /></IconButton>
            <IconButton aria-label="Print Preview"><PreviewIcon /></IconButton>
            <IconButton aria-label="Quick Print"><PrintIcon /></IconButton>
          </QuickPill>
          <MoreButton aria-label="Customize"><MoreIcon /></MoreButton>
        </QuickAccess>
        <DocTitle>Document1 - Microsoft Word</DocTitle>
        <ContextTitle>Drawing Tools</ContextTitle>
        <Caption>
          <IconButton aria-label="Minimize"><svg width="9" height="9"><path d="M1 7.500h7" stroke="#666" strokeWidth="2" /></svg></IconButton>
          <IconButton aria-label="Restore"><svg width="9" height="9" fill="none" stroke="#666"><path d="M2.500 2V.5h6v5H7" /><path d="M.5 2.500h6v5h-6zM.5 3.500h6" /></svg></IconButton>
          <IconButton aria-label="Close"><svg width="9" height="9"><path d="M1 0l7 8M8 0L1 8" stroke="#666" strokeWidth="2" /></svg></IconButton>
        </Caption>
      </TitleBar>
      <OfficeButton aria-label="Office"><OfficeLogo /></OfficeButton>
      <TabStrip>
        <RibbonTab>Home</RibbonTab>
        <RibbonTab>Insert</RibbonTab>
        <RibbonTab $active>Page Layout</RibbonTab>
        <RibbonTab>References</RibbonTab>
        <RibbonTab>Mailings</RibbonTab>
        <RibbonTab>Review</RibbonTab>
        <RibbonTab>View</RibbonTab>
        <ContextTab>Format</ContextTab>
        <HelpButton aria-label="Help">
          <svg width="14" height="14"><circle cx="7" cy="7" r="6" fill="#2d6fe0" stroke="#dfe8f8" /><path d="M5 5.500q0-2 2-2t2 1.700q0 1-2 2V8.500M7 9.500V11" fill="none" stroke="#fff" strokeWidth="1.500" /></svg>
        </HelpButton>
      </TabStrip>
      <Ribbon>
        <Group $width={80}>
          <GroupBody>
            <BigButton><ThemesIcon /><span>Themes</span><Caret /></BigButton>
            <Items gap={3} list={[{ icon: <ColorsIcon /> }, { icon: <FontsIcon /> }, { icon: <EffectsIcon /> }]} />
          </GroupBody>
          <GroupLabel>Themes</GroupLabel>
        </Group>
        <Group $width={236}>
          <GroupBody>
            <BigButton $wide><MarginsIcon /><span>Margins</span><Caret /></BigButton>
            <Items gap={5} list={[{ icon: <OrientationIcon />, text: "Orientation" }, { icon: <SizeIcon />, text: "Size" }, { icon: <ColumnsIcon />, text: "Columns" }]} />
            <Items gap={6} list={[{ icon: <BreaksIcon />, text: "Breaks" }, { icon: <LinesIcon />, text: "Line Numbers" }, { icon: <HyphenIcon />, text: "Hyphenation" }]} />
          </GroupBody>
          <GroupLabel>Page Setup</GroupLabel>
        </Group>
        <Group $grow>
          <GroupBody>
            <SpinStack>
              <SpinPair aria-label="Spacing before"><UpDown /></SpinPair>
              <SpinPair aria-label="Spacing after"><UpDown /></SpinPair>
            </SpinStack>
          </GroupBody>
          <LauncherLabel><LauncherIcon /></LauncherLabel>
        </Group>
        <Group $width={234}>
          <GroupBody>
            <BigButton $off $wide><PositionIcon /><span>Position</span><Caret color="#a2a5aa" /></BigButton>
            <Items gap={3} list={[{ icon: <FrontIcon />, text: "Bring to Front", off: true }, { icon: <BackIcon />, text: "Send to Back", off: true }, { icon: <WrapIcon />, text: "Text Wrapping" }]} />
            <Items gap={7} list={[{ icon: <AlignIcon />, text: "Align" }, { icon: <GroupIcon />, text: "Group", off: true }, { icon: <RotateIcon />, text: "Rotate" }]} />
          </GroupBody>
          <GroupLabel>Arrange</GroupLabel>
        </Group>
        <Stack $gap={49} />
      </Ribbon>

      <Workspace>
        <TabSelector aria-label="Tab stop">
          <svg width="15" height="15"><path d="M.5.500h14v14H.5z" fill="#e6e6e6" stroke="#333" /><path d="M6 4v6h6" fill="none" stroke="#333" strokeWidth="2" /></svg>
        </TabSelector>
        <RulerRow><HorizontalRuler /></RulerRow>
        <RulerToggle>
          <SplitHandle />
          <IconButton aria-label="View Ruler">
            <svg width="14" height="15"><path d="M0 0h14v15H0z" fill="#c4cde0" /><path d="M1.500 3.500h3v2h3v-2h5v7h-2v2h-3v-2h-6z" fill="#eef2fa" stroke="#4a5a80" /><path d="M3.500 1.500h3v3h-3zM8.500 9.500h3v3h-3z" fill="#fff" stroke="#4a5a80" /></svg>
          </IconButton>
        </RulerToggle>
        <RulerColumn><VerticalRuler /></RulerColumn>
        <Canvas>
          <Swoosh width="420" height="130">
            <path d="M0 0H310L271 9Q215 20 163 38Q76 63 0 94z" fill="#7f7f7f" />
            <path d="M0 94Q76 63 163 38Q215 20 271 9V12Q215 23 163 42Q76 70 0 116z" fill="#646464" />
            <path d="M0 116Q76 70 163 42Q215 24 271 11" fill="none" stroke="#757575" strokeWidth="1.500" />
          </Swoosh>
          <Sheet><TextArea /></Sheet>
        </Canvas>
        <ScrollColumn>
          <ScrollArrow aria-label="Scroll up"><Tri w={9} h={5} d="M0 5h9L4.500 0z" color="#b4b4b4" /></ScrollArrow>
          <ScrollTrack>
            <ScrollThumb><svg width="8" height="8"><path d="M0 .5h8M0 2.500h8M0 4.500h8M0 6.500h8" stroke="#808080" /></svg></ScrollThumb>
          </ScrollTrack>
          <ScrollArrow aria-label="Scroll down"><Tri w={9} h={5} d="M0 0h9L4.500 5z" color="#b4b4b4" /></ScrollArrow>
          <BrowseButtons>
            <IconButton aria-label="Previous"><Tri w={5} h={7} d="M0 3h5L2.500 0zM0 6h5L2.500 3zM1 6h3v1H1z" /></IconButton>
            <IconButton aria-label="Browse"><svg width="8" height="8"><circle cx="4" cy="4" r="3" fill="#ccc" stroke="#111" /></svg></IconButton>
            <IconButton aria-label="Next"><Tri w={5} h={7} d="M1 0h3v1H1zM0 1h5L2.500 4zM0 4h5L2.500 7z" /></IconButton>
          </BrowseButtons>
        </ScrollColumn>
      </Workspace>

      <StatusBar>
        <StatusItem>Page: 1 of 1</StatusItem>
        <StatusItem>Words: 0</StatusItem>
        <StatusItem><StatusPen /></StatusItem>
        <ViewZone>
          <ViewGroup>
            {viewIcons.map((icon, i) => <ViewButton key={i} $on={i === 0} aria-label={"View " + (i + 1)}>{icon}</ViewButton>)}
          </ViewGroup>
          <ZoomText>80%</ZoomText>
          <IconButton aria-label="Zoom out"><ZoomKnob /></IconButton>
          <ZoomRange type="range" aria-label="Zoom" min="0" max="100" defaultValue="38" />
          <IconButton aria-label="Zoom in"><ZoomKnob plus /></IconButton>
        </ViewZone>
      </StatusBar>

      <FillEffects />
      <Highlight $x={295} $y={25} $w={414} $h={480} />
      <Highlight $x={307} $y={53} $w={246} $h={50} />
      <Pointer width="14" height="21"><path d="M1 1v16l4-4 3 6.500 2.500-1L7.500 12H13z" fill="#fff" stroke="#000" /></Pointer>
    </Window>
  );
}
